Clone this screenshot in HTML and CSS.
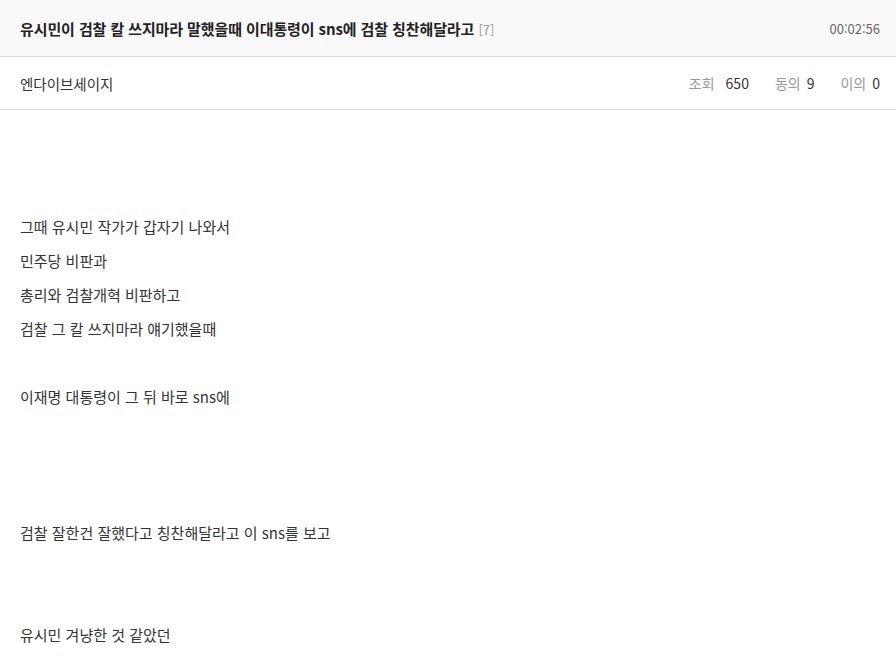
FILE: index.html
```html
<!DOCTYPE html>
<html lang="ko">
<head>
  <meta charset="UTF-8" />
  <meta name="viewport" content="width=device-width, initial-scale=1" />
  <title>유시민이 검찰 칼 쓰지마라 말했을때</title>
  <link rel="stylesheet" href="styles.css">
</head>
<body>

  <div class="post-head">
    <h1 class="post-title">유시민이 검찰 칼 쓰지마라 말했을때 이대통령이 sns에 검찰 칭찬해달라고 <span class="reply-count">[7]</span></h1>
    <span class="post-time">00:02:56</span>
  </div>

  <div class="post-info">
    <span class="author">엔다이브세이지</span>
    <div class="stats">
      <span class="stat"><span class="label views">조회</span><b>650</b></span>
      <span class="stat"><span class="label">동의</span><b>9</b></span>
      <span class="stat"><span class="label">이의</span><b>0</b></span>
    </div>
  </div>

  <div class="post-body">
    <p>&nbsp;</p>
    <p>&nbsp;</p>
    <p>그때 유시민 작가가 갑자기 나와서</p>
    <p>민주당 비판과</p>
    <p>총리와 검찰개혁 비판하고</p>
    <p>검찰 그 칼 쓰지마라 얘기했을때</p>
    <p>&nbsp;</p>
    <p>이재명 대통령이 그 뒤 바로 sns에</p>
    <p>&nbsp;</p>
    <p>&nbsp;</p>
    <p>&nbsp;</p>
    <p>검찰 잘한건 잘했다고 칭찬해달라고 이 sns를 보고</p>
    <p>&nbsp;</p>
    <p>&nbsp;</p>
    <p>유시민 겨냥한 것 같았던</p>
  </div>

</body>
</html>
```

FILE: styles.css
```css
body {
  margin: 0;
  background: #fff;
  font-family: "Noto Sans CJK KR", "Noto Sans", sans-serif;
  font-size: 14px;
  color: #333;
}

.post-head {
  display: flex;
  align-items: center;
  justify-content: space-between;
  height: 56px;
  padding: 0 16px 0 20px;
  background: #f9f9f9;
  border-bottom: 1px solid #ddd;
}

.post-title {
  margin: 0;
  font-size: 15px;
  font-weight: bold;
  color: #222;
  letter-spacing: -0.1px;
}

.reply-count {
  font-weight: normal;
  font-size: 13px;
  color: #999;
  letter-spacing: 0;
}

.post-time {
  font-size: 13px;
  color: #666;
}

.post-info {
  display: flex;
  align-items: center;
  justify-content: space-between;
  height: 52px;
  padding: 0 16px 0 20px;
  border-bottom: 1px solid #ddd;
}

.author {
  font-size: 14.5px;
  color: #333;
}

.stats {
  display: flex;
  gap: 26px;
}

.stat .label {
  color: #999;
  margin-right: 6px;
}

.stat .views {
  margin-right: 11px;
}

.stat b {
  font-weight: normal;
  color: #333;
}

.post-body {
  padding: 32px 20px 0;
  font-size: 15px;
}

.post-body p {
  margin: 0;
  line-height: 34px;
}
```
